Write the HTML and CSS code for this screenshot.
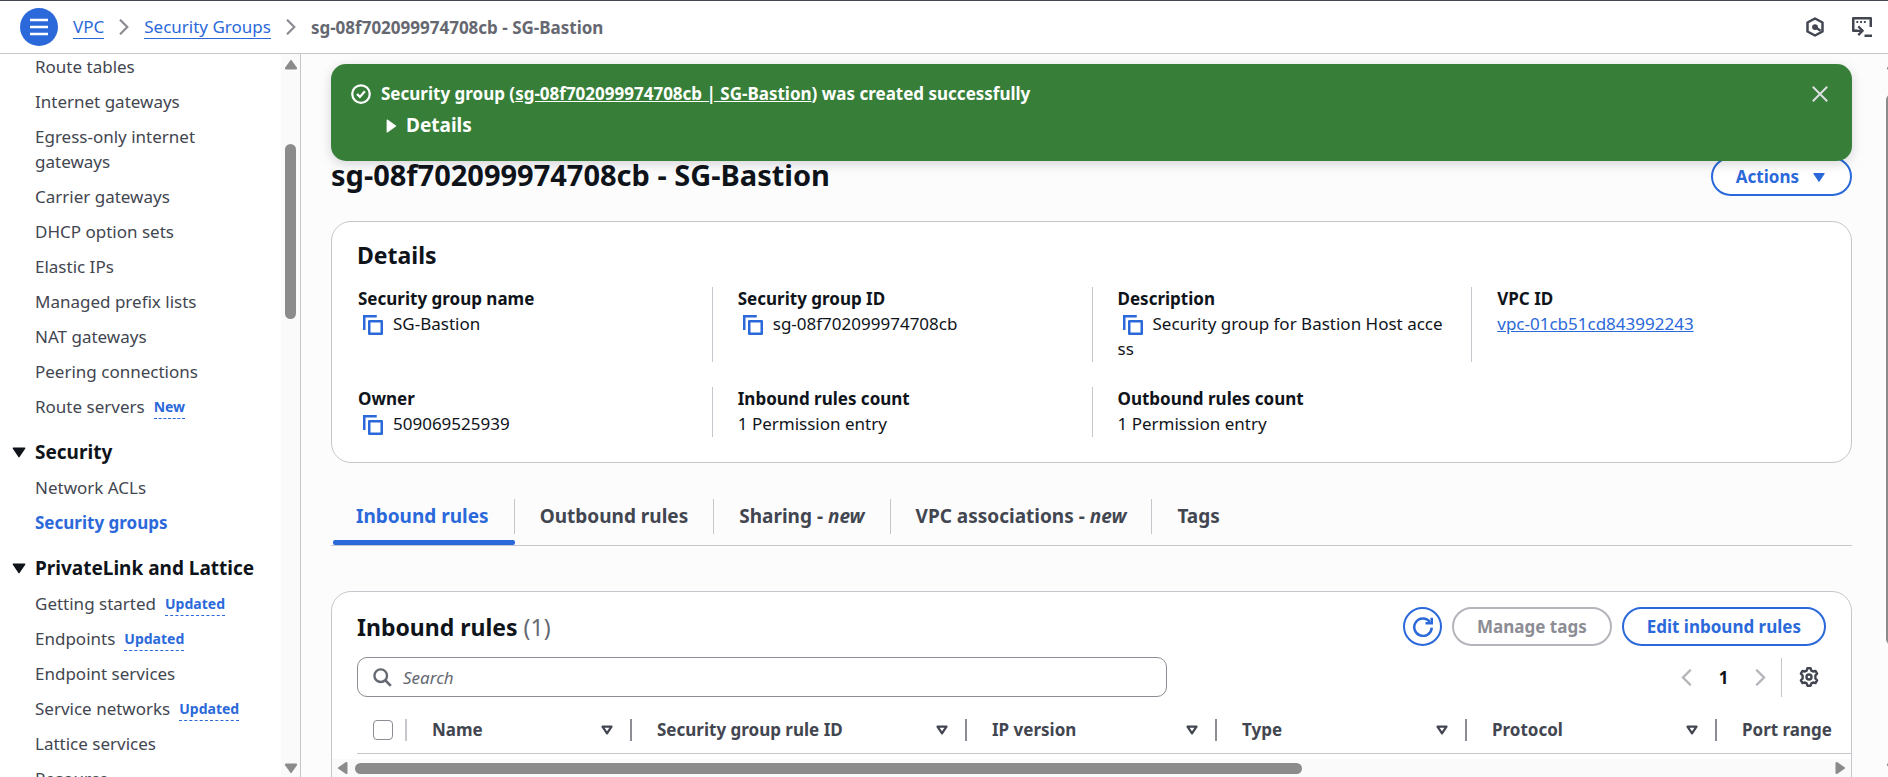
FILE: index.html
```html
<!DOCTYPE html>
<html lang="en">
<head>
<meta charset="utf-8">
<title>sg-08f702099974708cb - SG-Bastion | VPC</title>
<link rel="stylesheet" href="styles.css">
</head>
<body>
<svg class="sprite" aria-hidden="true">
  <symbol id="copy" viewBox="0 0 16 16"><path d="M1 12V1h10" fill="none" stroke="currentColor" stroke-width="2"/><rect x="5" y="5" width="10" height="10" fill="none" stroke="currentColor" stroke-width="2" stroke-linejoin="round"/></symbol>
  <symbol id="chevron" viewBox="0 0 16 16"><path d="M4 .7l7.300 7.300L4 15.300" fill="none" stroke="currentColor" stroke-width="2.200"/></symbol>
  <symbol id="caret-down" viewBox="0 0 16 16"><path d="M3 4h10a.6.6 0 0 1 .5 1l-5 7.500a.6.6 0 0 1-1 0L2.500 5a.6.6 0 0 1 .5-1z" fill="currentColor"/></symbol>
  <symbol id="sort" viewBox="0 0 16 16"><path d="M4 5h8l-4 6z" fill="none" stroke="currentColor" stroke-width="2" stroke-linejoin="round"/></symbol>
  <symbol id="arrow" viewBox="0 0 14 12"><path d="M6.200 1.400a1 1 0 0 1 1.600 0l5 7.200c.6.900.2 1.900-.8 1.900H2c-1 0-1.400-1-.8-1.900z" fill="currentColor"/></symbol>
</svg>

<header class="topbar">
  <button class="menu-button" type="button" aria-label="Open navigation">
    <svg viewBox="0 0 20 20"><path d="M1 3h18M1 10h18M1 17h18" stroke="currentColor" stroke-width="2.500"/></svg>
  </button>
  <nav class="breadcrumbs" aria-label="Breadcrumbs">
    <a href="#vpc">VPC</a>
    <svg><use href="#chevron"/></svg>
    <a href="#groups">Security Groups</a>
    <svg><use href="#chevron"/></svg>
    <span class="current">sg-08f702099974708cb - SG-Bastion</span>
  </nav>
  <div class="tools">
    <button class="icon-button" type="button" aria-label="Amazon Q">
      <svg viewBox="0 0 16 16"><path d="M8 1.200l6 3.200v7.200l-6 3.200-6-3.200V4.400z" fill="none" stroke="currentColor" stroke-width="2" stroke-linejoin="round"/><circle cx="8" cy="8" r="2.300" fill="currentColor"/><path d="M8 8l4.500 3" stroke="currentColor" stroke-width="2"/></svg>
    </button>
    <button class="icon-button" type="button" aria-label="CloudShell">
      <svg viewBox="0 0 16 16"><path d="M4.500 11H1V1h14v7" fill="none" stroke="currentColor" stroke-width="2" stroke-linejoin="round"/><path d="M3.500 4h1.500M6.500 4H8M9.500 4H11" stroke="currentColor" stroke-width="1.600"/><path d="M2 11h6M5 7.500L8.500 11 5 14.500" fill="none" stroke="currentColor" stroke-width="1.800"/><path d="M10 15h6" stroke="currentColor" stroke-width="2"/></svg>
    </button>
  </div>
</header>

<div class="shell">
  <aside class="sidebar">
    <nav class="side-nav" aria-label="VPC navigation">
      <ul>
        <li><a href="#rt">Route tables</a></li>
        <li><a href="#ig">Internet gateways</a></li>
        <li><a href="#eg">Egress-only internet gateways</a></li>
        <li><a href="#cg">Carrier gateways</a></li>
        <li><a href="#dh">DHCP option sets</a></li>
        <li><a href="#ei">Elastic IPs</a></li>
        <li><a href="#mp">Managed prefix lists</a></li>
        <li><a href="#ng">NAT gateways</a></li>
        <li><a href="#pc">Peering connections</a></li>
        <li><a href="#rs">Route servers</a><span class="tag">New</span></li>
      </ul>
      <button class="section" type="button"><svg><use href="#caret-down"/></svg>Security</button>
      <ul>
        <li><a href="#na">Network ACLs</a></li>
        <li><a class="active" href="#sg">Security groups</a></li>
      </ul>
      <button class="section" type="button"><svg><use href="#caret-down"/></svg>PrivateLink and Lattice</button>
      <ul>
        <li><a href="#gs">Getting started</a><span class="tag">Updated</span></li>
        <li><a href="#ep">Endpoints</a><span class="tag">Updated</span></li>
        <li><a href="#es">Endpoint services</a></li>
        <li><a href="#sn">Service networks</a><span class="tag">Updated</span></li>
        <li><a href="#ls">Lattice services</a></li>
        <li><a href="#rc">Resource</a></li>
      </ul>
    </nav>
    <div class="vscroll">
      <svg><use href="#arrow"/></svg>
      <div class="vtrack"><div class="vthumb"></div></div>
      <svg class="flip"><use href="#arrow"/></svg>
    </div>
  </aside>

  <main class="main">
    <div class="flash" role="status">
      <svg class="flash-icon" viewBox="0 0 16 16"><circle cx="8" cy="8" r="7" fill="none" stroke="currentColor" stroke-width="1.800"/><path d="M4.800 8l2.300 2.300 4-4.500" fill="none" stroke="currentColor" stroke-width="1.800"/></svg>
      <div class="flash-body">
        <p>Security group (<a href="#sg">sg-08f702099974708cb | SG-Bastion</a>) was created successfully</p>
        <button class="flash-details" type="button"><svg viewBox="0 0 12 16"><path d="M1 1.200v13.600c0 .6.600.900 1 .6l9.600-6.800a.7.700 0 0 0 0-1.200L2 .6c-.4-.3-1 0-1 .6z" fill="currentColor"/></svg>Details</button>
      </div>
      <button class="close" type="button" aria-label="Dismiss"><svg viewBox="0 0 16 16"><path d="M.8.800l14.400 14.400M15.200.800L.8 15.200" stroke="currentColor" stroke-width="2"/></svg></button>
    </div>

    <div class="title-row">
      <h1>sg-08f702099974708cb - SG-Bastion</h1>
      <button class="btn menu" type="button">Actions<svg><use href="#caret-down"/></svg></button>
    </div>

    <section class="card details">
      <h2>Details</h2>
      <dl class="facts">
        <div><dt>Security group name</dt><dd><svg><use href="#copy"/></svg>SG-Bastion</dd></div>
        <div><dt>Security group ID</dt><dd><svg><use href="#copy"/></svg>sg-08f702099974708cb</dd></div>
        <div><dt>Description</dt><dd><svg><use href="#copy"/></svg>Security group for Bastion Host access</dd></div>
        <div><dt>VPC ID</dt><dd><a href="#vpc">vpc-01cb51cd843992243</a></dd></div>
        <div><dt>Owner</dt><dd><svg><use href="#copy"/></svg>509069525939</dd></div>
        <div><dt>Inbound rules count</dt><dd>1 Permission entry</dd></div>
        <div><dt>Outbound rules count</dt><dd>1 Permission entry</dd></div>
      </dl>
    </section>

    <div class="tabs" role="tablist">
      <button type="button" role="tab" aria-selected="true"><span>Inbound rules</span></button>
      <button type="button" role="tab"><span>Outbound rules</span></button>
      <button type="button" role="tab"><span>Sharing - <em>new</em></span></button>
      <button type="button" role="tab"><span>VPC associations - <em>new</em></span></button>
      <button type="button" role="tab"><span>Tags</span></button>
    </div>

    <section class="card rules">
      <div class="rules-head">
        <h2>Inbound rules <span>(1)</span></h2>
        <button class="btn round" type="button" aria-label="Refresh"><svg viewBox="0 0 16 16"><path d="M15 8.500A7 7 0 1 1 13.500 3.800" fill="none" stroke="currentColor" stroke-width="2"/><path d="M15 .5V5h-5" fill="none" stroke="currentColor" stroke-width="2"/></svg></button>
        <button class="btn" type="button" disabled>Manage tags</button>
        <button class="btn" type="button">Edit inbound rules</button>
      </div>
      <div class="rules-tools">
        <label class="search">
          <svg viewBox="0 0 16 16"><circle cx="6.500" cy="6.500" r="5.300" fill="none" stroke="currentColor" stroke-width="2"/><path d="M10.300 10.300l4.700 4.700" stroke="currentColor" stroke-width="2.200"/></svg>
          <input type="search" placeholder="Search" aria-label="Search">
        </label>
        <div class="pager">
          <button class="flip-x" type="button" aria-label="Previous page" disabled><svg><use href="#chevron"/></svg></button>
          <button class="page" type="button">1</button>
          <button type="button" aria-label="Next page" disabled><svg><use href="#chevron"/></svg></button>
        </div>
        <button class="gear" type="button" aria-label="Preferences"><svg viewBox="0 0 16 16"><path d="M6.700 1h2.600l.6 1.900 1.300.7 2-.5 1.300 2.200-1.400 1.500v2.400l1.400 1.500-1.300 2.200-2-.5-1.300.7L9.300 15H6.700l-.6-1.900-1.300-.7-2 .5-1.300-2.200 1.400-1.500V6.800L1.500 5.300l1.300-2.200 2 .5 1.300-.7z" fill="none" stroke="currentColor" stroke-width="1.900" stroke-linejoin="round"/><circle cx="8" cy="8" r="2" fill="none" stroke="currentColor" stroke-width="1.900"/></svg></button>
      </div>
      <div class="table-wrap">
        <table>
          <colgroup><col class="c-check"><col class="c-name"><col class="c-id"><col class="c-std"><col class="c-std"><col class="c-std"><col class="c-std"></colgroup>
          <thead>
            <tr>
              <th class="check"><div><input type="checkbox" aria-label="Select all"></div></th>
              <th><div>Name<svg><use href="#sort"/></svg></div></th>
              <th><div>Security group rule ID<svg><use href="#sort"/></svg></div></th>
              <th><div>IP version<svg><use href="#sort"/></svg></div></th>
              <th><div>Type<svg><use href="#sort"/></svg></div></th>
              <th><div>Protocol<svg><use href="#sort"/></svg></div></th>
              <th><div>Port range</div></th>
            </tr>
          </thead>
        </table>
      </div>
      <div class="hscroll">
        <svg class="left"><use href="#arrow"/></svg>
        <div class="htrack"><div class="hthumb"></div></div>
        <svg class="right"><use href="#arrow"/></svg>
      </div>
    </section>

    <div class="page-scroll">
      <svg><use href="#arrow"/></svg>
      <div class="vtrack"><div class="vthumb"></div></div>
      <svg class="flip"><use href="#arrow"/></svg>
    </div>
  </main>
</div>
</body>
</html>
```
FILE: styles.css
```css
:root {
  --blue: #2b69da;
  --ink: #0f141a;
  --text: #424650;
  --muted: #656871;
  --line: #c6c6cd;
  --bar: #8b8b8b;
}
* { box-sizing: border-box; }
body {
  margin: 0;
  height: 100vh;
  display: flex;
  flex-direction: column;
  overflow: hidden;
  background: #fcfcfd;
  color: var(--ink);
  font: 17px/25px "Noto Sans", sans-serif;
}
h1, h2, p, ul, dl, dd { margin: 0; padding: 0; }
ul { list-style: none; }
a { color: var(--blue); }
button {
  font: inherit;
  color: inherit;
  background: none;
  border: 0;
  padding: 0;
}
svg { display: block; flex: none; }
.sprite { position: absolute; width: 0; height: 0; }

.topbar {
  flex: none;
  height: 54px;
  display: flex;
  align-items: center;
  gap: 15px;
  padding: 0 16px 0 20px;
  background: #fff;
  border-top: 1px solid #424650;
  border-bottom: 1px solid var(--line);
}
.menu-button {
  width: 38px;
  height: 38px;
  display: grid;
  place-items: center;
  border-radius: 50%;
  background: var(--blue);
  color: #fff;
}
.menu-button svg { width: 20px; height: 20px; }
.breadcrumbs { flex: 1; display: flex; align-items: center; gap: 12px; }
.breadcrumbs a { text-decoration: none; border-bottom: 1px solid; line-height: 22px; }
.breadcrumbs svg { width: 16px; height: 16px; color: #8c8c94; }
.current { font-weight: 700; color: var(--muted); }
.tools { display: flex; gap: 27px; color: var(--text); }
.icon-button svg { width: 20px; height: 20px; }

.shell { flex: 1; min-height: 0; display: flex; }
.sidebar {
  flex: none;
  width: 301px;
  display: flex;
  background: #fff;
  border-right: 1px solid var(--line);
}
.side-nav { flex: 1; overflow: hidden; padding-left: 10px; }
.side-nav ul { padding-left: 25px; width: 220px; }
.side-nav li { margin-bottom: 10px; display: flex; white-space: nowrap; gap: 9px; }
.side-nav li a { color: var(--text); text-decoration: none; white-space: normal; }
.side-nav li a:not(:only-child) { white-space: nowrap; }
.side-nav li a.active { color: var(--blue); font-weight: 700; }
.tag {
  color: var(--blue);
  font-size: 14px;
  font-weight: 700;
  line-height: 20px;
  margin-top: 3px;
  border-bottom: 1px dashed;
}
.section {
  display: flex;
  align-items: center;
  gap: 7px;
  margin: 20px 0 10px;
  font-size: 19px;
  font-weight: 700;
  line-height: 26px;
  white-space: nowrap;
}
.section svg { width: 18px; height: 18px; }

.vscroll {
  flex: none;
  width: 19px;
  display: flex;
  flex-direction: column;
  align-items: center;
  padding: 5px 0 3px;
  background: #fafafa;
}
.vscroll svg, .page-scroll svg { width: 14px; height: 12px; color: var(--bar); }
.flip { transform: rotate(180deg); }
.vtrack { flex: 1; width: 11px; }
.vthumb { background: var(--bar); border-radius: 6px; }
.vscroll .vtrack { padding-top: 73px; }
.vscroll .vthumb { height: 175px; }

.main {
  flex: 1;
  min-width: 0;
  position: relative;
  padding: 103px 36px 0 30px;
  overflow: hidden;
}
.page-scroll {
  position: absolute;
  top: 5px;
  right: -13px;
  bottom: 3px;
  width: 15px;
  display: flex;
  flex-direction: column;
}
.page-scroll .vtrack { padding-top: 23px; width: 15px; }
.page-scroll .vthumb { height: 551px; }

.flash {
  position: absolute;
  z-index: 2;
  top: 10px;
  left: 30px;
  right: 36px;
  display: flex;
  gap: 10px;
  padding: 17px 24px 23px 20px;
  border-radius: 15px;
  background: #377f39;
  color: #fff;
  font-weight: 700;
  box-shadow: 0 3px 12px rgba(0, 7, 22, .16);
}
.flash-icon { width: 20px; height: 20px; margin-top: 3px; }
.flash-body { flex: 1; }
.flash a { color: inherit; }
.flash-details {
  display: flex;
  align-items: center;
  gap: 9px;
  margin-top: 7px;
  padding-left: 4px;
  font-size: 19px;
  font-weight: 700;
}
.flash-details svg { width: 12px; height: 14px; }
.close { align-self: flex-start; margin-top: 4px; color: #dedee3; }
.close svg { width: 16px; height: 18px; }

.title-row { display: flex; align-items: flex-start; justify-content: space-between; }
h1 { font-size: 29px; line-height: 36px; font-weight: 700; }
h2 { font-size: 23px; line-height: 28px; font-weight: 700; }
.btn {
  height: 39px;
  display: flex;
  align-items: center;
  gap: 12px;
  padding: 0 23px;
  border: 2px solid var(--blue);
  border-radius: 20px;
  background: #fff;
  color: var(--blue);
  font-weight: 700;
}
.btn svg { width: 16px; height: 16px; }
.btn:disabled { border-color: #b4b4bb; color: #8c8c94; }
.btn.round { width: 39px; padding: 0; justify-content: center; }
.btn.round svg { width: 20px; height: 20px; }

.card { background: #fff; border: 1px solid var(--line); border-radius: 20px; }
.details { margin-top: 25px; padding: 19px 0 25px; }
.details h2 { padding-left: 25px; }
.facts {
  display: grid;
  grid-template-columns: repeat(4, 1fr);
  row-gap: 25px;
  margin-top: 18px;
}
.facts > div { padding: 0 25px; border-left: 1px solid var(--line); }
.facts > div:nth-child(4n + 1) { border-left-color: transparent; }
dt { font-weight: 700; line-height: 24px; }
dd { word-break: break-all; }
dd:last-child { padding-bottom: 1px; }
dd svg {
  display: inline-block;
  width: 20px;
  height: 20px;
  margin: 0 10px 0 5px;
  vertical-align: -5px;
  color: var(--blue);
}

.tabs { display: flex; margin-top: 36px; border-bottom: 1px solid var(--line); }
.tabs button {
  position: relative;
  padding-bottom: 11px;
  color: var(--text);
  font-size: 19px;
  font-weight: 700;
}
.tabs span { display: block; padding: 5px 25px; border-right: 1px solid var(--line); }
.tabs button:last-child span { border-right: 0; }
.tabs [aria-selected] { color: var(--blue); }
.tabs [aria-selected]::after {
  content: "";
  position: absolute;
  left: 2px;
  right: 0;
  bottom: 0;
  height: 5px;
  border-radius: 2px;
  background: var(--blue);
}

.rules { margin-top: 45px; padding-top: 15px; height: 400px; }
.rules-head { display: flex; align-items: center; gap: 10px; padding: 0 25px; }
.rules-head h2 { flex: 1; }
.rules-head h2 span { font-weight: 400; color: var(--muted); }
.rules-tools { display: flex; align-items: center; padding: 0 25px; margin-top: 11px; }
.search {
  flex: 0 1 810px;
  height: 40px;
  display: flex;
  align-items: center;
  gap: 11px;
  padding: 0 15px;
  border: 1px solid #8c8c94;
  border-radius: 10px;
}
.search svg { width: 19px; height: 19px; color: var(--muted); }
.search input { flex: 1; border: 0; outline: 0; padding: 0; font: inherit; background: none; }
.search input::placeholder { color: var(--muted); font-style: italic; opacity: 1; }
.pager { display: flex; align-items: center; margin-left: auto; gap: 20px; padding-right: 12px; }
.pager svg { width: 17px; height: 17px; color: #b4b4bb; }
.flip-x { transform: rotate(180deg); }
.page { width: 17px; font-weight: 700; }
.gear { height: 39px; padding: 0 7px 0 17px; border-left: 1px solid var(--line); color: var(--text); }
.gear svg { width: 20px; height: 20px; }

.table-wrap { margin-left: 25px; margin-top: 10px; overflow: hidden; }
table { width: 1610px; table-layout: fixed; border-collapse: collapse; }
.c-check { width: 50px; }
.c-name { width: 225px; }
.c-id { width: 335px; }
.c-std { width: 250px; }
th { padding: 0; height: 46px; text-align: left; color: var(--text); border-bottom: 1px solid var(--line); }
th div {
  display: flex;
  align-items: center;
  justify-content: space-between;
  height: 22px;
  padding: 0 14px 0 25px;
  border-right: 2px solid #8c8c94;
}
th svg { width: 18px; height: 18px; }
th.check div { padding: 0 0 0 16px; border-color: var(--line); }
th input {
  appearance: none;
  width: 20px;
  height: 20px;
  margin: 0;
  border: 1px solid #8c8c94;
  border-radius: 4px;
  background: #fff;
}
.hscroll {
  display: flex;
  align-items: center;
  height: 19px;
  margin-top: 5px;
  padding: 0 4px;
  background: #fafafa;
}
.hscroll svg { width: 14px; height: 12px; color: var(--bar); }
.left { transform: rotate(-90deg); }
.right { transform: rotate(90deg); }
.htrack { flex: 1; padding: 0 5px; }
.hthumb { width: 64.3%; height: 11px; border-radius: 6px; background: var(--bar); }
```
